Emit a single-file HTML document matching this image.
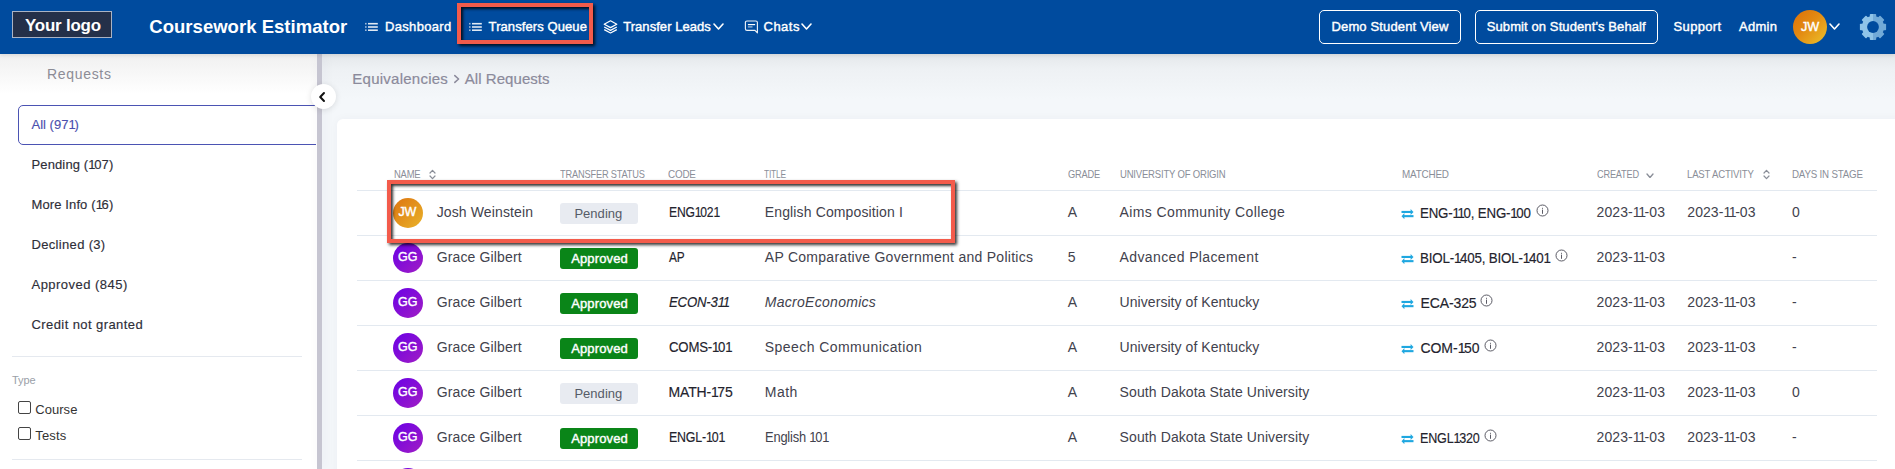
<!DOCTYPE html>
<html><head><meta charset="utf-8"><title>Coursework Estimator</title>
<style>
html,body{margin:0;padding:0;}
body{width:1895px;height:469px;overflow:hidden;position:relative;background:#f4f7fa;font-family:"Liberation Sans",sans-serif;}
.a{position:absolute;}
.t{position:absolute;white-space:nowrap;font-family:"Liberation Sans",sans-serif;}
.circ{border-radius:50%;}
</style></head><body>
<!-- main bg gradient -->
<div class="a" style="left:322px;top:54px;width:1573px;height:45px;background:linear-gradient(#e5e8eb,#eef1f4 35%,#f4f7fa)"></div>
<!-- card -->
<div class="a" style="left:337px;top:118.6px;width:1600px;height:400px;background:#fff;border-radius:6px;box-shadow:0 0 10px rgba(20,40,80,.04)"></div>
<!-- sidebar -->
<div class="a" style="left:0;top:54px;width:317px;height:415px;background:#fff"></div>
<div class="a" style="left:0;top:54px;width:317px;height:40px;background:linear-gradient(#f0f0f0,rgba(255,255,255,0))"></div>
<div class="a" style="left:0;top:100px;width:315.5px;height:50px;overflow:hidden"><div class="a" style="left:18px;top:5px;width:302px;height:38px;border:1px solid #4b53b3;border-radius:5px"></div></div>
<div class="a" style="left:12px;top:356px;width:290px;height:1px;background:#e5e9ef"></div>
<div class="a" style="left:18px;top:401px;width:11px;height:11px;border:1px solid #444;border-radius:2px;background:#fff"></div>
<div class="a" style="left:18px;top:427px;width:11px;height:11px;border:1px solid #444;border-radius:2px;background:#fff"></div>
<div class="a" style="left:12px;top:459px;width:290px;height:1px;background:#e5e9ef"></div>
<div class="a" style="left:317px;top:54px;width:5px;height:415px;background:#c6c5d1;box-shadow:2px 0 12px rgba(20,40,80,.06)"></div>
<div class="a circ" style="left:311px;top:84px;width:25px;height:25px;background:#fff;box-shadow:0 1px 6px rgba(0,0,0,.12)"></div>
<svg class="a" style="left:317px;top:91px" width="10" height="12" viewBox="0 0 10 12"><path d="M7 2 L3.2 6 L7 10" fill="none" stroke="#111" stroke-width="2" stroke-linecap="round" stroke-linejoin="round"/></svg>
<svg class="a" style="left:453px;top:74px" width="8" height="10" viewBox="0 0 8 10"><path d="M1.8 1.6 L5.6 5 L1.8 8.4" fill="none" stroke="#8b8a9b" stroke-width="1.5" stroke-linecap="round" stroke-linejoin="round"/></svg>
<div class="a" style="left:357px;top:190px;width:1520px;height:1px;background:#e3e9f0"></div><div class="a" style="left:357px;top:235px;width:1520px;height:1px;background:#e3e9f0"></div><div class="a" style="left:357px;top:280px;width:1520px;height:1px;background:#e3e9f0"></div><div class="a" style="left:357px;top:325px;width:1520px;height:1px;background:#e3e9f0"></div><div class="a" style="left:357px;top:370px;width:1520px;height:1px;background:#e3e9f0"></div><div class="a" style="left:357px;top:415px;width:1520px;height:1px;background:#e3e9f0"></div><div class="a" style="left:357px;top:460px;width:1520px;height:1px;background:#e3e9f0"></div>
<div class="a circ" style="left:393px;top:198px;width:30px;height:30px;background:linear-gradient(135deg,#dd7410 0%,#e9b32a 100%)"></div><div class="a" style="left:560px;top:203px;width:78px;height:20.5px;border-radius:3px;background:#e8ebf1"></div><svg class="a" style="left:1401px;top:208.8px" width="13" height="10" viewBox="0 0 13 10"><g fill="#1ea7e0"><rect x="0.5" y="1.9" width="9.5" height="2.1"/><path d="M9.6 0 L12.5 2.95 L9.6 5.9 Z"/><rect x="3" y="6.1" width="9.5" height="2.1"/><path d="M3.4 4.1 L0.5 7.15 L3.4 10.2 Z"/></g></svg><svg class="a" style="left:1535.5px;top:204.4px" width="13" height="13" viewBox="0 0 13 13"><circle cx="6.5" cy="6.5" r="5.5" fill="none" stroke="#4a4a55" stroke-width="0.9"/><rect x="6.05" y="5.6" width="0.9" height="4.2" fill="#4a4a55"/><rect x="6.05" y="3.8" width="0.9" height="1" fill="#4a4a55"/></svg><div class="a circ" style="left:393px;top:243px;width:30px;height:30px;background:linear-gradient(135deg,#6a00e6 0%,#a11ec4 100%)"></div><div class="a" style="left:560px;top:248px;width:78px;height:20.5px;border-radius:3px;background:#0a8518"></div><svg class="a" style="left:1401px;top:253.8px" width="13" height="10" viewBox="0 0 13 10"><g fill="#1ea7e0"><rect x="0.5" y="1.9" width="9.5" height="2.1"/><path d="M9.6 0 L12.5 2.95 L9.6 5.9 Z"/><rect x="3" y="6.1" width="9.5" height="2.1"/><path d="M3.4 4.1 L0.5 7.15 L3.4 10.2 Z"/></g></svg><svg class="a" style="left:1554.5px;top:249.4px" width="13" height="13" viewBox="0 0 13 13"><circle cx="6.5" cy="6.5" r="5.5" fill="none" stroke="#4a4a55" stroke-width="0.9"/><rect x="6.05" y="5.6" width="0.9" height="4.2" fill="#4a4a55"/><rect x="6.05" y="3.8" width="0.9" height="1" fill="#4a4a55"/></svg><div class="a circ" style="left:393px;top:288px;width:30px;height:30px;background:linear-gradient(135deg,#6a00e6 0%,#a11ec4 100%)"></div><div class="a" style="left:560px;top:293px;width:78px;height:20.5px;border-radius:3px;background:#0a8518"></div><svg class="a" style="left:1401px;top:298.8px" width="13" height="10" viewBox="0 0 13 10"><g fill="#1ea7e0"><rect x="0.5" y="1.9" width="9.5" height="2.1"/><path d="M9.6 0 L12.5 2.95 L9.6 5.9 Z"/><rect x="3" y="6.1" width="9.5" height="2.1"/><path d="M3.4 4.1 L0.5 7.15 L3.4 10.2 Z"/></g></svg><svg class="a" style="left:1479.5px;top:294.4px" width="13" height="13" viewBox="0 0 13 13"><circle cx="6.5" cy="6.5" r="5.5" fill="none" stroke="#4a4a55" stroke-width="0.9"/><rect x="6.05" y="5.6" width="0.9" height="4.2" fill="#4a4a55"/><rect x="6.05" y="3.8" width="0.9" height="1" fill="#4a4a55"/></svg><div class="a circ" style="left:393px;top:333px;width:30px;height:30px;background:linear-gradient(135deg,#6a00e6 0%,#a11ec4 100%)"></div><div class="a" style="left:560px;top:338px;width:78px;height:20.5px;border-radius:3px;background:#0a8518"></div><svg class="a" style="left:1401px;top:343.8px" width="13" height="10" viewBox="0 0 13 10"><g fill="#1ea7e0"><rect x="0.5" y="1.9" width="9.5" height="2.1"/><path d="M9.6 0 L12.5 2.95 L9.6 5.9 Z"/><rect x="3" y="6.1" width="9.5" height="2.1"/><path d="M3.4 4.1 L0.5 7.15 L3.4 10.2 Z"/></g></svg><svg class="a" style="left:1483.5px;top:339.4px" width="13" height="13" viewBox="0 0 13 13"><circle cx="6.5" cy="6.5" r="5.5" fill="none" stroke="#4a4a55" stroke-width="0.9"/><rect x="6.05" y="5.6" width="0.9" height="4.2" fill="#4a4a55"/><rect x="6.05" y="3.8" width="0.9" height="1" fill="#4a4a55"/></svg><div class="a circ" style="left:393px;top:378px;width:30px;height:30px;background:linear-gradient(135deg,#6a00e6 0%,#a11ec4 100%)"></div><div class="a" style="left:560px;top:383px;width:78px;height:20.5px;border-radius:3px;background:#e8ebf1"></div><div class="a circ" style="left:393px;top:423px;width:30px;height:30px;background:linear-gradient(135deg,#6a00e6 0%,#a11ec4 100%)"></div><div class="a" style="left:560px;top:428px;width:78px;height:20.5px;border-radius:3px;background:#0a8518"></div><svg class="a" style="left:1401px;top:433.8px" width="13" height="10" viewBox="0 0 13 10"><g fill="#1ea7e0"><rect x="0.5" y="1.9" width="9.5" height="2.1"/><path d="M9.6 0 L12.5 2.95 L9.6 5.9 Z"/><rect x="3" y="6.1" width="9.5" height="2.1"/><path d="M3.4 4.1 L0.5 7.15 L3.4 10.2 Z"/></g></svg><svg class="a" style="left:1483.5px;top:429.4px" width="13" height="13" viewBox="0 0 13 13"><circle cx="6.5" cy="6.5" r="5.5" fill="none" stroke="#4a4a55" stroke-width="0.9"/><rect x="6.05" y="5.6" width="0.9" height="4.2" fill="#4a4a55"/><rect x="6.05" y="3.8" width="0.9" height="1" fill="#4a4a55"/></svg><div class="a circ" style="left:393px;top:468px;width:30px;height:30px;background:linear-gradient(135deg,#6a00e6 0%,#a11ec4 100%)"></div>
<!-- header -->
<div class="a" style="left:0;top:0;width:1895px;height:54px;background:#004b9e;box-shadow:0 2px 3px rgba(0,0,0,.08)"></div>
<div class="a" style="left:12px;top:11px;width:98px;height:25px;background:#243049;border:1px solid #aab3c4"></div>
<div class="a" style="left:1319px;top:10px;width:140px;height:32px;border:1.3px solid #fff;border-radius:5px"></div>
<div class="a" style="left:1475px;top:10px;width:181px;height:32px;border:1.3px solid #fff;border-radius:5px"></div>
<div class="a circ" style="left:1793px;top:10px;width:34px;height:34px;background:linear-gradient(135deg,#dc7008 0%,#e38a12 45%,#ecc22c 100%)"></div>
<svg class="a" style="left:365px;top:22px" width="14" height="10" viewBox="0 0 14 10"><g fill="#fff" opacity=".88"><rect x="0" y="0.9" width="1.6" height="1.6" opacity=".7"/><rect x="0" y="4.2" width="1.6" height="1.6" opacity=".7"/><rect x="0" y="7.4" width="1.6" height="1.6" opacity=".7"/><rect x="3" y="0.9" width="9.8" height="1.6"/><rect x="3" y="4.2" width="9.8" height="1.6"/><rect x="3" y="7.4" width="9.8" height="1.6"/></g></svg><svg class="a" style="left:469px;top:22px" width="14" height="10" viewBox="0 0 14 10"><g fill="#fff" opacity=".88"><rect x="0" y="0.9" width="1.6" height="1.6" opacity=".7"/><rect x="0" y="4.2" width="1.6" height="1.6" opacity=".7"/><rect x="0" y="7.4" width="1.6" height="1.6" opacity=".7"/><rect x="3" y="0.9" width="9.8" height="1.6"/><rect x="3" y="4.2" width="9.8" height="1.6"/><rect x="3" y="7.4" width="9.8" height="1.6"/></g></svg><svg class="a" style="left:603px;top:20px" width="15" height="14" viewBox="0 0 15 14"><g fill="none" stroke="#fff" stroke-width="1.2" stroke-linejoin="round"><path d="M7.5 0.8 L13.8 4.2 L7.5 7.6 L1.2 4.2 Z"/><path d="M1.2 7 L7.5 10.4 L13.8 7"/><path d="M1.2 9.6 L7.5 13 L13.8 9.6"/></g></svg><svg class="a" style="left:713px;top:23px" width="11" height="7" viewBox="0 0 11 7"><path d="M1 1 L5.5 6 L10 1" fill="none" stroke="#fff" stroke-width="1.6" stroke-linecap="round" stroke-linejoin="round"/></svg><svg class="a" style="left:744px;top:20px" width="15" height="14" viewBox="0 0 15 14"><g fill="none" stroke="#fff" stroke-width="1.15" stroke-linejoin="round" opacity=".92"><path d="M3 1 H11.8 Q13.4 1 13.4 2.6 V12.8 L11 10.3 H3 Q1.4 10.3 1.4 8.7 V2.6 Q1.4 1 3 1 Z"/></g><rect x="3.9" y="4" width="7.2" height="1.2" fill="#fff"/><rect x="3.9" y="6.3" width="4.6" height="1.2" fill="#fff" opacity=".65"/></svg><svg class="a" style="left:801px;top:23px" width="11" height="7" viewBox="0 0 11 7"><path d="M1 1 L5.5 6 L10 1" fill="none" stroke="#fff" stroke-width="1.6" stroke-linecap="round" stroke-linejoin="round"/></svg><svg class="a" style="left:1829px;top:23px" width="11" height="7" viewBox="0 0 11 7"><path d="M1 1 L5.5 6 L10 1" fill="none" stroke="#fff" stroke-width="1.6" stroke-linecap="round" stroke-linejoin="round"/></svg><svg class="a" style="left:1859px;top:13px" width="28" height="28" viewBox="0 0 28 28"><defs><clipPath id="lh"><rect x="0" y="0" width="14" height="28"/></clipPath><clipPath id="rh"><rect x="14" y="0" width="14" height="28"/></clipPath></defs>
<g clip-path="url(#lh)" fill="#90c4e8"><rect x="10.8" y="0.9" width="6.4" height="6" rx="0.8" transform="rotate(0 14 14)"/><rect x="10.8" y="0.9" width="6.4" height="6" rx="0.8" transform="rotate(45 14 14)"/><rect x="10.8" y="0.9" width="6.4" height="6" rx="0.8" transform="rotate(90 14 14)"/><rect x="10.8" y="0.9" width="6.4" height="6" rx="0.8" transform="rotate(135 14 14)"/><rect x="10.8" y="0.9" width="6.4" height="6" rx="0.8" transform="rotate(180 14 14)"/><rect x="10.8" y="0.9" width="6.4" height="6" rx="0.8" transform="rotate(225 14 14)"/><rect x="10.8" y="0.9" width="6.4" height="6" rx="0.8" transform="rotate(270 14 14)"/><rect x="10.8" y="0.9" width="6.4" height="6" rx="0.8" transform="rotate(315 14 14)"/><circle cx="14" cy="14" r="11.1"/></g>
<g clip-path="url(#rh)" fill="#72aad8"><rect x="10.8" y="0.9" width="6.4" height="6" rx="0.8" transform="rotate(0 14 14)"/><rect x="10.8" y="0.9" width="6.4" height="6" rx="0.8" transform="rotate(45 14 14)"/><rect x="10.8" y="0.9" width="6.4" height="6" rx="0.8" transform="rotate(90 14 14)"/><rect x="10.8" y="0.9" width="6.4" height="6" rx="0.8" transform="rotate(135 14 14)"/><rect x="10.8" y="0.9" width="6.4" height="6" rx="0.8" transform="rotate(180 14 14)"/><rect x="10.8" y="0.9" width="6.4" height="6" rx="0.8" transform="rotate(225 14 14)"/><rect x="10.8" y="0.9" width="6.4" height="6" rx="0.8" transform="rotate(270 14 14)"/><rect x="10.8" y="0.9" width="6.4" height="6" rx="0.8" transform="rotate(315 14 14)"/><circle cx="14" cy="14" r="11.1"/></g>
<circle cx="14" cy="14" r="5.9" fill="#004b9e"/></svg><svg class="a" style="left:429px;top:169px" width="7" height="11" viewBox="0 0 7 11"><path d="M1 4 L3.5 1.3 L6 4 M1 7 L3.5 9.7 L6 7" fill="none" stroke="#8a8e98" stroke-width="1.2" stroke-linecap="round" stroke-linejoin="round"/></svg><svg class="a" style="left:1646px;top:172.5px" width="8" height="5.5" viewBox="0 0 8 5.5"><path d="M1 1 L4.0 4.5 L7 1" fill="none" stroke="#8a8e98" stroke-width="1.3" stroke-linecap="round" stroke-linejoin="round"/></svg><svg class="a" style="left:1763px;top:169px" width="7" height="11" viewBox="0 0 7 11"><path d="M1 4 L3.5 1.3 L6 4 M1 7 L3.5 9.7 L6 7" fill="none" stroke="#8a8e98" stroke-width="1.2" stroke-linecap="round" stroke-linejoin="round"/></svg>
<div class="t" style="left:25.0px;top:16.9px;color:#ffffff;letter-spacing:-0.200px;transform:scaleX(0.9948);transform-origin:0 0;font-size:17px;line-height:17px;font-weight:700;">Your logo</div><div class="t" style="left:149.3px;top:17.9px;color:#ffffff;letter-spacing:0.026px;font-size:18.5px;line-height:18.5px;font-weight:700;">Coursework Estimator</div><div class="t" style="left:385.0px;top:20.2px;color:#ffffff;letter-spacing:0.325px;font-size:13px;line-height:13px;font-weight:400;-webkit-text-stroke:0.4px currentColor;">Dashboard</div><div class="t" style="left:488.6px;top:20.1px;color:#ffffff;letter-spacing:0.086px;font-size:13px;line-height:13px;font-weight:400;-webkit-text-stroke:0.4px currentColor;">Transfers Queue</div><div class="t" style="left:623.2px;top:20.0px;color:#ffffff;letter-spacing:0.054px;font-size:13px;line-height:13px;font-weight:400;-webkit-text-stroke:0.4px currentColor;">Transfer Leads</div><div class="t" style="left:763.5px;top:20.0px;color:#ffffff;letter-spacing:0.500px;font-size:13px;line-height:13px;font-weight:400;-webkit-text-stroke:0.4px currentColor;">Chats</div><div class="t" style="left:1331.5px;top:20.3px;color:#ffffff;letter-spacing:0.138px;font-size:13px;line-height:13px;font-weight:400;-webkit-text-stroke:0.4px currentColor;">Demo Student View</div><div class="t" style="left:1486.7px;top:20.3px;color:#ffffff;letter-spacing:0.104px;font-size:13px;line-height:13px;font-weight:400;-webkit-text-stroke:0.4px currentColor;">Submit on Student&#x27;s Behalf</div><div class="t" style="left:1673.6px;top:19.7px;color:#ffffff;letter-spacing:0.333px;font-size:13px;line-height:13px;font-weight:400;-webkit-text-stroke:0.4px currentColor;">Support</div><div class="t" style="left:1738.9px;top:19.7px;color:#ffffff;letter-spacing:0.325px;font-size:13px;line-height:13px;font-weight:400;-webkit-text-stroke:0.4px currentColor;">Admin</div><div class="t" style="left:1801.0px;top:20.0px;color:#ffffff;letter-spacing:-0.200px;transform:scaleX(0.9734);transform-origin:0 0;font-size:13px;line-height:13px;font-weight:400;-webkit-text-stroke:0.4px currentColor;">JW</div><div class="t" style="left:47.0px;top:67.1px;color:#8c8c96;letter-spacing:0.686px;font-size:14px;line-height:14px;font-weight:400;">Requests</div><div class="t" style="left:31.5px;top:118.4px;color:#4b4fae;letter-spacing:0.014px;font-size:13px;line-height:13px;font-weight:400;-webkit-text-stroke:0.15px currentColor;">All (97<span style="letter-spacing:-1.30px">1</span>)</div><div class="t" style="left:31.5px;top:158.4px;color:#2e2e38;letter-spacing:0.127px;font-size:13px;line-height:13px;font-weight:400;-webkit-text-stroke:0.15px currentColor;">Pending (<span style="letter-spacing:-1.30px">1</span>07)</div><div class="t" style="left:31.5px;top:198.4px;color:#2e2e38;letter-spacing:0.117px;font-size:13px;line-height:13px;font-weight:400;-webkit-text-stroke:0.15px currentColor;">More Info (<span style="letter-spacing:-1.30px">1</span>6)</div><div class="t" style="left:31.5px;top:238.4px;color:#2e2e38;letter-spacing:0.327px;font-size:13px;line-height:13px;font-weight:400;-webkit-text-stroke:0.15px currentColor;">Declined (3)</div><div class="t" style="left:31.5px;top:278.4px;color:#2e2e38;letter-spacing:0.469px;font-size:13px;line-height:13px;font-weight:400;-webkit-text-stroke:0.15px currentColor;">Approved (845)</div><div class="t" style="left:31.5px;top:318.4px;color:#2e2e38;letter-spacing:0.418px;font-size:13px;line-height:13px;font-weight:400;-webkit-text-stroke:0.15px currentColor;">Credit not granted</div><div class="t" style="left:12.0px;top:374.7px;color:#9aa0a8;letter-spacing:-0.100px;font-size:11px;line-height:11px;font-weight:400;">Type</div><div class="t" style="left:35.2px;top:403.2px;color:#333;letter-spacing:0.060px;font-size:13px;line-height:13px;font-weight:400;">Course</div><div class="t" style="left:35.2px;top:429.3px;color:#333;letter-spacing:0.200px;font-size:13px;line-height:13px;font-weight:400;">Tests</div><div class="t" style="left:352.3px;top:71.1px;color:#8b8a9b;letter-spacing:0.250px;font-size:15px;line-height:15px;font-weight:400;-webkit-text-stroke:0.2px currentColor;">Equivalencies</div><div class="t" style="left:464.7px;top:71.1px;color:#8b8a9b;letter-spacing:0.064px;font-size:15px;line-height:15px;font-weight:400;-webkit-text-stroke:0.2px currentColor;">All Requests</div><div class="t" style="left:393.5px;top:170.0px;color:#8a8e98;letter-spacing:-0.200px;transform:scaleX(0.9331);transform-origin:0 0;font-size:10.1px;line-height:10.1px;font-weight:400;">NAME</div><div class="t" style="left:560.2px;top:170.0px;color:#8a8e98;letter-spacing:-0.200px;transform:scaleX(0.9163);transform-origin:0 0;font-size:10.1px;line-height:10.1px;font-weight:400;">TRANSFER STATUS</div><div class="t" style="left:668.2px;top:170.0px;color:#8a8e98;letter-spacing:-0.200px;transform:scaleX(0.9789);transform-origin:0 0;font-size:10.1px;line-height:10.1px;font-weight:400;">CODE</div><div class="t" style="left:764.4px;top:170.0px;color:#8a8e98;letter-spacing:-0.200px;transform:scaleX(0.8309);transform-origin:0 0;font-size:10.1px;line-height:10.1px;font-weight:400;">TITLE</div><div class="t" style="left:1067.7px;top:170.0px;color:#8a8e98;letter-spacing:-0.200px;transform:scaleX(0.9176);transform-origin:0 0;font-size:10.1px;line-height:10.1px;font-weight:400;">GRADE</div><div class="t" style="left:1119.5px;top:170.0px;color:#8a8e98;letter-spacing:-0.200px;transform:scaleX(0.9421);transform-origin:0 0;font-size:10.1px;line-height:10.1px;font-weight:400;">UNIVERSITY OF ORIGIN</div><div class="t" style="left:1401.6px;top:170.0px;color:#8a8e98;letter-spacing:-0.200px;transform:scaleX(0.9791);transform-origin:0 0;font-size:10.1px;line-height:10.1px;font-weight:400;">MATCHED</div><div class="t" style="left:1596.6px;top:170.0px;color:#8a8e98;letter-spacing:-0.200px;transform:scaleX(0.9103);transform-origin:0 0;font-size:10.1px;line-height:10.1px;font-weight:400;">CREATED</div><div class="t" style="left:1687.3px;top:170.0px;color:#8a8e98;letter-spacing:-0.200px;transform:scaleX(0.9504);transform-origin:0 0;font-size:10.1px;line-height:10.1px;font-weight:400;">LAST ACTIVITY</div><div class="t" style="left:1792.1px;top:170.0px;color:#8a8e98;letter-spacing:-0.200px;transform:scaleX(0.9660);transform-origin:0 0;font-size:10.1px;line-height:10.1px;font-weight:400;">DAYS IN STAGE</div><div class="t" style="left:436.7px;top:205.2px;color:#42424d;letter-spacing:0.123px;font-size:14px;line-height:14px;font-weight:400;">Josh Weinstein</div><div class="t" style="left:668.6px;top:205.2px;color:#23232d;letter-spacing:-0.200px;transform:scaleX(0.8661);transform-origin:0 0;font-size:14px;line-height:14px;font-weight:400;-webkit-text-stroke:0.15px currentColor;">ENG<span style="letter-spacing:-1.40px">1</span>02<span style="letter-spacing:-1.40px">1</span></div><div class="t" style="left:764.8px;top:205.2px;color:#42424d;letter-spacing:0.130px;font-size:14px;line-height:14px;font-weight:400;">English Composition I</div><div class="t" style="left:1067.7px;top:205.2px;color:#42424d;letter-spacing:0.000px;font-size:14px;line-height:14px;font-weight:400;">A</div><div class="t" style="left:1119.6px;top:205.2px;color:#42424d;letter-spacing:0.381px;font-size:14px;line-height:14px;font-weight:400;">Aims Community College</div><div class="t" style="left:1420.4px;top:206.0px;color:#23232d;letter-spacing:-0.200px;transform:scaleX(0.9490);transform-origin:0 0;font-size:14px;line-height:14px;font-weight:400;-webkit-text-stroke:0.15px currentColor;">ENG-<span style="letter-spacing:-1.40px">1</span><span style="letter-spacing:-1.40px">1</span>0, ENG-<span style="letter-spacing:-1.40px">1</span>00</div><div class="t" style="left:1596.6px;top:205.2px;color:#42424d;letter-spacing:0.086px;font-size:14px;line-height:14px;font-weight:400;">2023-<span style="letter-spacing:-1.40px">1</span><span style="letter-spacing:-1.40px">1</span>-03</div><div class="t" style="left:1687.3px;top:205.2px;color:#42424d;letter-spacing:0.057px;font-size:14px;line-height:14px;font-weight:400;">2023-<span style="letter-spacing:-1.40px">1</span><span style="letter-spacing:-1.40px">1</span>-03</div><div class="t" style="left:1792.1px;top:205.2px;color:#42424d;letter-spacing:0.000px;font-size:14px;line-height:14px;font-weight:400;">0</div><div class="t" style="left:436.7px;top:250.2px;color:#42424d;letter-spacing:0.142px;font-size:14px;line-height:14px;font-weight:400;">Grace Gilbert</div><div class="t" style="left:668.6px;top:250.2px;color:#23232d;letter-spacing:-0.200px;transform:scaleX(0.8457);transform-origin:0 0;font-size:14px;line-height:14px;font-weight:400;-webkit-text-stroke:0.15px currentColor;">AP</div><div class="t" style="left:764.8px;top:250.2px;color:#42424d;letter-spacing:0.273px;font-size:14px;line-height:14px;font-weight:400;">AP Comparative Government and Politics</div><div class="t" style="left:1067.7px;top:250.2px;color:#42424d;letter-spacing:0.000px;font-size:14px;line-height:14px;font-weight:400;">5</div><div class="t" style="left:1119.6px;top:250.2px;color:#42424d;letter-spacing:0.376px;font-size:14px;line-height:14px;font-weight:400;">Advanced Placement</div><div class="t" style="left:1420.4px;top:251.0px;color:#23232d;letter-spacing:-0.200px;transform:scaleX(0.9549);transform-origin:0 0;font-size:14px;line-height:14px;font-weight:400;-webkit-text-stroke:0.15px currentColor;">BIOL-<span style="letter-spacing:-1.40px">1</span>405, BIOL-<span style="letter-spacing:-1.40px">1</span>40<span style="letter-spacing:-1.40px">1</span></div><div class="t" style="left:1596.6px;top:250.2px;color:#42424d;letter-spacing:0.086px;font-size:14px;line-height:14px;font-weight:400;">2023-<span style="letter-spacing:-1.40px">1</span><span style="letter-spacing:-1.40px">1</span>-03</div><div class="t" style="left:1792.1px;top:250.2px;color:#42424d;letter-spacing:0.000px;font-size:14px;line-height:14px;font-weight:400;">-</div><div class="t" style="left:436.7px;top:295.2px;color:#42424d;letter-spacing:0.142px;font-size:14px;line-height:14px;font-weight:400;">Grace Gilbert</div><div class="t" style="left:668.6px;top:295.2px;color:#23232d;letter-spacing:-0.200px;transform:scaleX(0.9420);transform-origin:0 0;font-size:14px;line-height:14px;font-weight:400;-webkit-text-stroke:0.15px currentColor;font-style:italic;">ECON-3<span style="letter-spacing:-1.40px">1</span><span style="letter-spacing:-1.40px">1</span></div><div class="t" style="left:764.8px;top:295.2px;color:#42424d;letter-spacing:0.285px;font-size:14px;line-height:14px;font-weight:400;font-style:italic;">MacroEconomics</div><div class="t" style="left:1067.7px;top:295.2px;color:#42424d;letter-spacing:0.000px;font-size:14px;line-height:14px;font-weight:400;">A</div><div class="t" style="left:1119.6px;top:295.2px;color:#42424d;letter-spacing:0.057px;font-size:14px;line-height:14px;font-weight:400;">University of Kentucky</div><div class="t" style="left:1420.4px;top:296.0px;color:#23232d;letter-spacing:-0.100px;font-size:14px;line-height:14px;font-weight:400;-webkit-text-stroke:0.15px currentColor;">ECA-325</div><div class="t" style="left:1596.6px;top:295.2px;color:#42424d;letter-spacing:0.086px;font-size:14px;line-height:14px;font-weight:400;">2023-<span style="letter-spacing:-1.40px">1</span><span style="letter-spacing:-1.40px">1</span>-03</div><div class="t" style="left:1687.3px;top:295.2px;color:#42424d;letter-spacing:0.057px;font-size:14px;line-height:14px;font-weight:400;">2023-<span style="letter-spacing:-1.40px">1</span><span style="letter-spacing:-1.40px">1</span>-03</div><div class="t" style="left:1792.1px;top:295.2px;color:#42424d;letter-spacing:0.000px;font-size:14px;line-height:14px;font-weight:400;">-</div><div class="t" style="left:436.7px;top:340.2px;color:#42424d;letter-spacing:0.142px;font-size:14px;line-height:14px;font-weight:400;">Grace Gilbert</div><div class="t" style="left:668.6px;top:340.2px;color:#23232d;letter-spacing:-0.200px;transform:scaleX(0.9425);transform-origin:0 0;font-size:14px;line-height:14px;font-weight:400;-webkit-text-stroke:0.15px currentColor;">COMS-<span style="letter-spacing:-1.40px">1</span>0<span style="letter-spacing:-1.40px">1</span></div><div class="t" style="left:764.8px;top:340.2px;color:#42424d;letter-spacing:0.437px;font-size:14px;line-height:14px;font-weight:400;">Speech Communication</div><div class="t" style="left:1067.7px;top:340.2px;color:#42424d;letter-spacing:0.000px;font-size:14px;line-height:14px;font-weight:400;">A</div><div class="t" style="left:1119.6px;top:340.2px;color:#42424d;letter-spacing:0.057px;font-size:14px;line-height:14px;font-weight:400;">University of Kentucky</div><div class="t" style="left:1420.4px;top:341.0px;color:#23232d;letter-spacing:-0.020px;font-size:14px;line-height:14px;font-weight:400;-webkit-text-stroke:0.15px currentColor;">COM-<span style="letter-spacing:-1.40px">1</span>50</div><div class="t" style="left:1596.6px;top:340.2px;color:#42424d;letter-spacing:0.086px;font-size:14px;line-height:14px;font-weight:400;">2023-<span style="letter-spacing:-1.40px">1</span><span style="letter-spacing:-1.40px">1</span>-03</div><div class="t" style="left:1687.3px;top:340.2px;color:#42424d;letter-spacing:0.057px;font-size:14px;line-height:14px;font-weight:400;">2023-<span style="letter-spacing:-1.40px">1</span><span style="letter-spacing:-1.40px">1</span>-03</div><div class="t" style="left:1792.1px;top:340.2px;color:#42424d;letter-spacing:0.000px;font-size:14px;line-height:14px;font-weight:400;">-</div><div class="t" style="left:436.7px;top:385.2px;color:#42424d;letter-spacing:0.142px;font-size:14px;line-height:14px;font-weight:400;">Grace Gilbert</div><div class="t" style="left:668.6px;top:385.2px;color:#23232d;letter-spacing:-0.183px;font-size:14px;line-height:14px;font-weight:400;-webkit-text-stroke:0.15px currentColor;">MATH-<span style="letter-spacing:-1.40px">1</span>75</div><div class="t" style="left:764.8px;top:385.2px;color:#42424d;letter-spacing:0.467px;font-size:14px;line-height:14px;font-weight:400;">Math</div><div class="t" style="left:1067.7px;top:385.2px;color:#42424d;letter-spacing:0.000px;font-size:14px;line-height:14px;font-weight:400;">A</div><div class="t" style="left:1119.6px;top:385.2px;color:#42424d;letter-spacing:0.100px;font-size:14px;line-height:14px;font-weight:400;">South Dakota State University</div><div class="t" style="left:1596.6px;top:385.2px;color:#42424d;letter-spacing:0.086px;font-size:14px;line-height:14px;font-weight:400;">2023-<span style="letter-spacing:-1.40px">1</span><span style="letter-spacing:-1.40px">1</span>-03</div><div class="t" style="left:1687.3px;top:385.2px;color:#42424d;letter-spacing:0.057px;font-size:14px;line-height:14px;font-weight:400;">2023-<span style="letter-spacing:-1.40px">1</span><span style="letter-spacing:-1.40px">1</span>-03</div><div class="t" style="left:1792.1px;top:385.2px;color:#42424d;letter-spacing:0.000px;font-size:14px;line-height:14px;font-weight:400;">0</div><div class="t" style="left:436.7px;top:430.2px;color:#42424d;letter-spacing:0.142px;font-size:14px;line-height:14px;font-weight:400;">Grace Gilbert</div><div class="t" style="left:668.6px;top:430.2px;color:#23232d;letter-spacing:-0.200px;transform:scaleX(0.8856);transform-origin:0 0;font-size:14px;line-height:14px;font-weight:400;-webkit-text-stroke:0.15px currentColor;">ENGL-<span style="letter-spacing:-1.40px">1</span>0<span style="letter-spacing:-1.40px">1</span></div><div class="t" style="left:764.8px;top:430.2px;color:#42424d;letter-spacing:-0.200px;transform:scaleX(0.9202);transform-origin:0 0;font-size:14px;line-height:14px;font-weight:400;">English <span style="letter-spacing:-1.40px">1</span>0<span style="letter-spacing:-1.40px">1</span></div><div class="t" style="left:1067.7px;top:430.2px;color:#42424d;letter-spacing:0.000px;font-size:14px;line-height:14px;font-weight:400;">A</div><div class="t" style="left:1119.6px;top:430.2px;color:#42424d;letter-spacing:0.100px;font-size:14px;line-height:14px;font-weight:400;">South Dakota State University</div><div class="t" style="left:1420.4px;top:431.0px;color:#23232d;letter-spacing:-0.200px;transform:scaleX(0.8967);transform-origin:0 0;font-size:14px;line-height:14px;font-weight:400;-webkit-text-stroke:0.15px currentColor;">ENGL<span style="letter-spacing:-1.40px">1</span>320</div><div class="t" style="left:1596.6px;top:430.2px;color:#42424d;letter-spacing:0.086px;font-size:14px;line-height:14px;font-weight:400;">2023-<span style="letter-spacing:-1.40px">1</span><span style="letter-spacing:-1.40px">1</span>-03</div><div class="t" style="left:1687.3px;top:430.2px;color:#42424d;letter-spacing:0.057px;font-size:14px;line-height:14px;font-weight:400;">2023-<span style="letter-spacing:-1.40px">1</span><span style="letter-spacing:-1.40px">1</span>-03</div><div class="t" style="left:1792.1px;top:430.2px;color:#42424d;letter-spacing:0.000px;font-size:14px;line-height:14px;font-weight:400;">-</div><div class="t" style="left:574.4px;top:206.5px;color:#565b67;letter-spacing:0.033px;font-size:13px;line-height:13px;font-weight:400;">Pending</div><div class="t" style="left:398.4px;top:206.2px;color:#ffffff;letter-spacing:-0.200px;font-size:12.5px;line-height:12.5px;font-weight:400;-webkit-text-stroke:0.4px currentColor;">JW</div><div class="t" style="left:571.2px;top:251.5px;color:#ffffff;letter-spacing:0.143px;font-size:13px;line-height:13px;font-weight:400;-webkit-text-stroke:0.4px currentColor;">Approved</div><div class="t" style="left:398.0px;top:251.4px;color:#ffffff;letter-spacing:0.000px;font-size:12.5px;line-height:12.5px;font-weight:400;-webkit-text-stroke:0.4px currentColor;">GG</div><div class="t" style="left:571.2px;top:296.5px;color:#ffffff;letter-spacing:0.143px;font-size:13px;line-height:13px;font-weight:400;-webkit-text-stroke:0.4px currentColor;">Approved</div><div class="t" style="left:398.0px;top:296.4px;color:#ffffff;letter-spacing:0.000px;font-size:12.5px;line-height:12.5px;font-weight:400;-webkit-text-stroke:0.4px currentColor;">GG</div><div class="t" style="left:571.2px;top:341.5px;color:#ffffff;letter-spacing:0.143px;font-size:13px;line-height:13px;font-weight:400;-webkit-text-stroke:0.4px currentColor;">Approved</div><div class="t" style="left:398.0px;top:341.4px;color:#ffffff;letter-spacing:0.000px;font-size:12.5px;line-height:12.5px;font-weight:400;-webkit-text-stroke:0.4px currentColor;">GG</div><div class="t" style="left:574.4px;top:386.5px;color:#565b67;letter-spacing:0.033px;font-size:13px;line-height:13px;font-weight:400;">Pending</div><div class="t" style="left:398.0px;top:386.4px;color:#ffffff;letter-spacing:0.000px;font-size:12.5px;line-height:12.5px;font-weight:400;-webkit-text-stroke:0.4px currentColor;">GG</div><div class="t" style="left:571.2px;top:431.5px;color:#ffffff;letter-spacing:0.143px;font-size:13px;line-height:13px;font-weight:400;-webkit-text-stroke:0.4px currentColor;">Approved</div><div class="t" style="left:398.0px;top:431.4px;color:#ffffff;letter-spacing:0.000px;font-size:12.5px;line-height:12.5px;font-weight:400;-webkit-text-stroke:0.4px currentColor;">GG</div>
<!-- red highlight boxes -->
<div class="a" style="left:457px;top:3px;width:128px;height:33px;border:4px solid #f35b4b;box-shadow:2px 2px 3px rgba(0,0,0,.8), inset 2px 2px 3px rgba(0,0,0,.8)"></div>
<div class="a" style="left:387px;top:180px;width:560px;height:55px;border:4px solid #f35b4b;box-shadow:2px 2px 3px rgba(0,0,0,.8), inset 2px 2px 3px rgba(0,0,0,.8)"></div>
</body></html>
